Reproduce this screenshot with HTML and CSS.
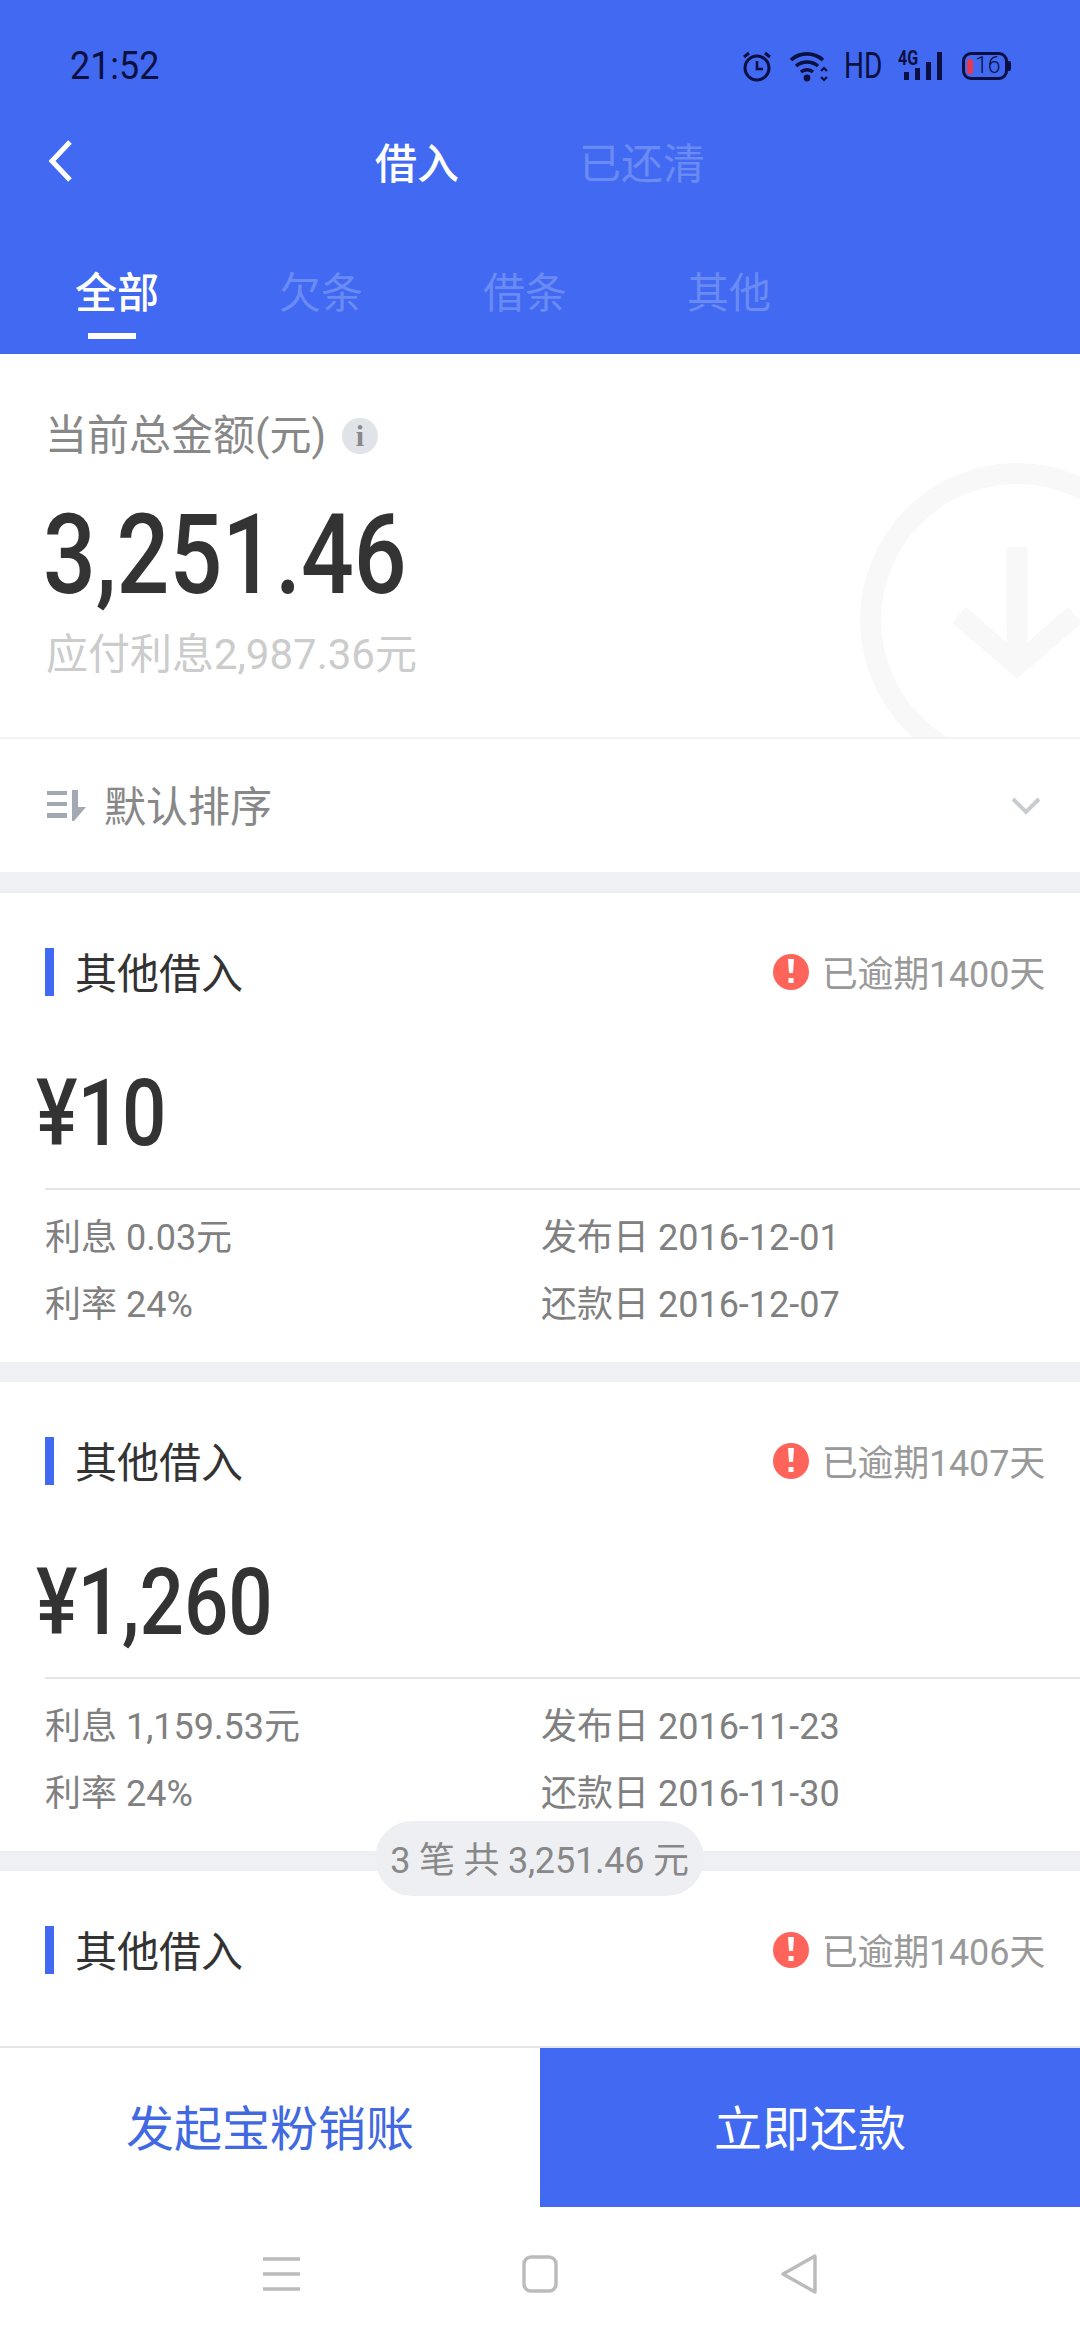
FILE: index.html
```html
<!DOCTYPE html>
<html lang="zh">
<head>
<meta charset="utf-8">
<title>借入</title>
<link rel="stylesheet" href="styles.css">
</head>
<body>
<div class="app">
  <header class="header">
    <div class="status">
      <span class="time">21:52</span>
      <div class="status-icons">
        <svg class="ic-alarm" width="30" height="32" viewBox="0 0 30 32"><circle cx="15" cy="18" r="12" fill="none" stroke="#0b1040" stroke-width="3"/><path d="M15 11v8h6" fill="none" stroke="#0b1040" stroke-width="2.6"/><path d="M2 7l5-4M28 7l-5-4" stroke="#0b1040" stroke-width="3"/></svg>
        <svg class="ic-wifi" width="40" height="32" viewBox="0 0 40 32"><path d="M1 10a24 24 0 0 1 32 0M6 16a17 17 0 0 1 22 0M11 22a9 9 0 0 1 12 0" fill="none" stroke="#0b1040" stroke-width="3.6"/><circle cx="17" cy="28" r="3.4" fill="#0b1040"/><path d="M31 21l3-3 3 3M31 27l3 3 3-3" fill="none" stroke="#0b1040" stroke-width="2.2"/></svg>
        <span class="hd">HD</span>
        <div class="signal">
          <span class="four-g">4G</span>
          <svg width="38" height="30" viewBox="0 0 38 30"><path d="M0 21h5v8H0zM11 17h5v12h-5zM22 11h5v18h-5zM33 1h5v28h-5z" fill="#0b1040"/></svg>
        </div>
        <div class="battery"><span class="battery-fill"></span><span class="battery-num">16</span></div>
      </div>
    </div>
    <div class="topnav">
      <svg class="back" width="26" height="42" viewBox="0 0 26 42"><path d="M23 2L5 21l18 19" fill="none" stroke="#fff" stroke-width="5"/></svg>
      <div class="topnav-tabs">
        <span class="top-tab top-tab-on">借入</span>
        <span class="top-tab">已还清</span>
      </div>
    </div>
    <nav class="subtabs">
      <span class="subtab subtab-on">全部</span>
      <span class="subtab">欠条</span>
      <span class="subtab">借条</span>
      <span class="subtab">其他</span>
    </nav>
  </header>

  <section class="summary">
    <svg class="watermark" width="240" height="297" viewBox="0 0 240 297"><circle cx="177" cy="180" r="146.5" fill="none" stroke="#f8f8f8" stroke-width="21"/><path d="M177 107v120M119 175l58 50 58-50" fill="none" stroke="#f8f8f8" stroke-width="21"/></svg>
    <div class="summary-label">
      <span>当前总金额(元)</span>
      <span class="info">i</span>
    </div>
    <div class="total">3,251.46</div>
    <div class="interest">应付利息2,987.36元</div>
  </section>

  <div class="sort">
    <div class="sort-left">
      <svg width="40" height="32" viewBox="0 0 40 32"><path d="M1 1h20v4H1zM1 12h20v4H1zM1 23h20v5H1z" fill="#a3a9b3"/><path d="M26 0h6v17h8L28 31h-2z" fill="#a3a9b3"/></svg>
      <span>默认排序</span>
    </div>
    <svg width="30" height="18" viewBox="0 0 30 18"><path d="M2 2l13 13L28 2" fill="none" stroke="#c8ccd1" stroke-width="4"/></svg>
  </div>

  <div class="list">
    <article class="card">
      <div class="card-head">
        <div class="card-title">其他借入</div>
        <div class="overdue">
          <svg width="36" height="36" viewBox="0 0 36 36"><circle cx="18" cy="18" r="18" fill="#ff645a"/><path d="M15 5h6l-1 14h-4zM15.500 24h5v5h-5z" fill="#fff"/></svg>
          <span class="overdue-text">已逾期1400天</span>
        </div>
      </div>
      <div class="amount">¥10</div>
      <div class="details">
        <span>利息 0.03元</span><span>发布日 2016-12-01</span>
        <span>利率 24%</span><span>还款日 2016-12-07</span>
      </div>
    </article>
    <article class="card">
      <div class="card-head">
        <div class="card-title">其他借入</div>
        <div class="overdue">
          <svg width="36" height="36" viewBox="0 0 36 36"><circle cx="18" cy="18" r="18" fill="#ff645a"/><path d="M15 5h6l-1 14h-4zM15.500 24h5v5h-5z" fill="#fff"/></svg>
          <span class="overdue-text">已逾期1407天</span>
        </div>
      </div>
      <div class="amount">¥1,260</div>
      <div class="details">
        <span>利息 1,159.53元</span><span>发布日 2016-11-23</span>
        <span>利率 24%</span><span>还款日 2016-11-30</span>
      </div>
    </article>
    <article class="card">
      <div class="card-head">
        <div class="card-title">其他借入</div>
        <div class="overdue">
          <svg width="36" height="36" viewBox="0 0 36 36"><circle cx="18" cy="18" r="18" fill="#ff645a"/><path d="M15 5h6l-1 14h-4zM15.500 24h5v5h-5z" fill="#fff"/></svg>
          <span class="overdue-text">已逾期1406天</span>
        </div>
      </div>
    </article>
    <div class="pill"><span class="pill-text">3 笔 共 3,251.46 元</span></div>
  </div>

  <footer class="actions">
    <div class="action action-plain">发起宝粉销账</div>
    <div class="action action-primary">立即还款</div>
  </footer>

  <div class="sysnav">
    <svg width="37" height="34" viewBox="0 0 37 34"><path d="M0 2h37M0 17h37M0 32h37" stroke="#bbb" stroke-width="3.4"/></svg>
    <svg width="36" height="38" viewBox="0 0 36 38"><rect x="2" y="2" width="32" height="34" rx="7" fill="none" stroke="#bbb" stroke-width="3.4"/></svg>
    <svg width="38" height="40" viewBox="0 0 38 40"><path d="M35 2v36L3 20z" fill="none" stroke="#bbb" stroke-width="3.4" stroke-linejoin="round"/></svg>
  </div>
</div>
</body>
</html>
```
FILE: styles.css
```css
* { box-sizing: border-box; }
html, body { margin: 0; padding: 0; }
body {
  width: 1080px;
  height: 2340px;
  background: #fff;
  font-family: Roboto, "Noto Sans CJK SC", sans-serif;
  overflow: hidden;
}
.app { width: 1080px; height: 2340px; display: flex; flex-direction: column; }

.header { height: 354px; background: #4169f1; flex: none; }
.status {
  height: 132px;
  padding: 48px 69px 0 70px;
  display: flex;
  justify-content: space-between;
  align-items: flex-start;
}
.time { font-size: 39px; line-height: 36px; color: #0b1040; transform: scaleX(.92); transform-origin: left; }
.status-icons { display: flex; align-items: center; gap: 15px; height: 36px; }
.ic-wifi { margin-left: 3px; margin-right: -1px; }
.hd { font-size: 36px; line-height: 36px; color: #0b1040; width: 36px; transform: scaleX(.78); transform-origin: left; }
.signal { position: relative; width: 44px; height: 30px; margin-left: 3px; }
.signal svg { position: absolute; right: 0; top: 0; }
.four-g { position: absolute; left: 0; top: -3px; font-size: 20px; line-height: 20px; font-weight: 700; color: #0b1040; transform: scaleX(.8); transform-origin: left; }
.battery {
  position: relative;
  width: 46px;
  height: 28px;
  border: 3px solid #0b1040;
  border-radius: 9px;
  display: flex;
  align-items: center;
  padding-left: 2px;
  gap: 2px;
  margin-left: 5px;
  margin-right: 3px;
}
.battery::after {
  content: "";
  position: absolute;
  right: -6px;
  top: 6px;
  width: 3px;
  height: 10px;
  background: #0b1040;
  border-radius: 0 2px 2px 0;
}
.battery-fill { width: 6px; height: 15px; background: #e8384f; border-radius: 2px; }
.battery-num { font-size: 23px; line-height: 22px; font-weight: 300; color: #0b1040; }

.topnav { height: 72px; position: relative; display: flex; justify-content: center; }
.back { position: absolute; left: 47px; top: 8px; }
.topnav-tabs { display: flex; gap: 120px; width: 328px; padding-top: 3px; margin-left: -2px; }
.top-tab { font-size: 42px; line-height: 60px; color: #6a8af4; white-space: nowrap; flex: none; }
.top-tab-on { color: #fff; font-weight: 500; }

.subtabs { display: flex; gap: 120px; padding: 60px 0 0 75px; height: 150px; }
.subtab { font-size: 42px; line-height: 60px; width: 84px; color: #6a8af4; position: relative; white-space: nowrap; }
.subtab-on { color: #fff; font-weight: 500; }
.subtab-on::after {
  content: "";
  position: absolute;
  left: 13px;
  top: 69px;
  width: 48px;
  height: 6px;
  background: #fff;
}

.summary { height: 383px; flex: none; position: relative; overflow: hidden; padding: 52px 0 0 45px; }
.watermark { position: absolute; right: 0; top: 86px; }
.summary-label { display: flex; align-items: center; font-size: 42px; line-height: 60px; color: #888; gap: 16px; position: relative; }
.info {
  width: 36px;
  height: 36px;
  border-radius: 50%;
  background: #e0e3e8;
  color: #888;
  font-family: "Liberation Serif", serif;
  font-weight: 700;
  font-size: 30px;
  line-height: 36px;
  text-align: center;
}
.total {
  font-size: 112px;
  line-height: 120px;
  margin: 29px 0 0 -2px;
  font-weight: 500;
  color: #333;
  transform: scaleX(.83);
  transform-origin: left;
  position: relative;
}
.interest { font-size: 42px; line-height: 60px; color: #ccc; position: relative; margin: 10px 0 0 1px; }

.sort {
  height: 135px;
  flex: none;
  border-top: 2px solid #f2f2f2;
  padding: 0 39px 0 46px;
  display: flex;
  align-items: center;
  justify-content: space-between;
}
.sort-left { display: flex; align-items: center; gap: 18px; font-size: 42px; color: #888; line-height: 60px; padding-top: 1px; }
.sort-left span { position: relative; top: 2px; }

.list { flex: 1; min-height: 0; overflow: hidden; background: #eef0f4; padding-top: 21px; position: relative; display: flex; flex-direction: column; gap: 20px; }
.card { height: 469px; flex: none; background: #fff; padding: 55px 0 0 45px; }
.card-head { height: 48px; display: flex; align-items: center; justify-content: space-between; padding-right: 36px; border-left: 9px solid #4169f1; padding-left: 21px; }
.card-title { font-size: 42px; line-height: 48px; color: #333; padding-top: 5px; }
.overdue { display: flex; align-items: center; gap: 13px; font-size: 36px; line-height: 48px; color: #999; letter-spacing: -0.2px; margin-right: -1px; }
.overdue-text { padding-top: 5px; }
.amount {
  font-size: 92px;
  line-height: 100px;
  height: 100px;
  margin: 68px 0 0 -9px;
  color: #333;
  font-weight: 500;
  transform: scaleX(.85);
  transform-origin: left;
}
.details {
  margin-top: 24px;
  border-top: 2px solid #e5e5e5;
  padding-top: 15px;
  display: grid;
  grid-template-columns: 496px 1fr;
  grid-auto-rows: 67px;
  font-size: 36px;
  line-height: 67px;
  color: #808080;
}

.pill {
  position: absolute;
  left: 375px;
  top: 949px;
  width: 329px;
  height: 75px;
  border-radius: 38px;
  background: #eeeff3;
  color: #888;
  font-size: 36px;
  line-height: 75px;
  text-align: center;
  white-space: nowrap;
  letter-spacing: -0.2px;
}
.pill-text { position: relative; top: 3px; }

.actions { height: 161px; flex: none; display: flex; border-top: 2px solid #e5e5e5; background: #fff; }
.action { flex: 1; display: flex; align-items: center; justify-content: center; font-size: 48px; padding-bottom: 5px; }
.action-plain { color: #4169e1; }
.action-primary { background: #4169f1; color: #fff; }

.sysnav {
  height: 133px;
  flex: none;
  background: #fff;
  display: flex;
  justify-content: center;
  align-items: center;
  gap: 222px;
}
```
